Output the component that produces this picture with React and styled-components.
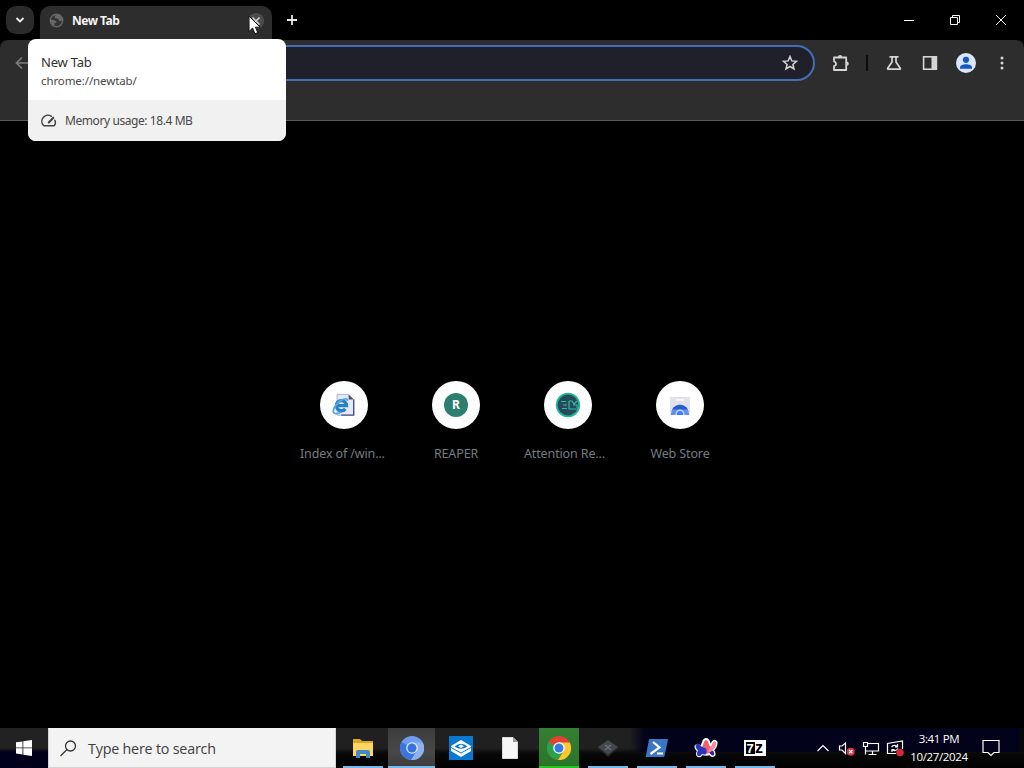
import React from 'react'
import styled, { createGlobalStyle } from 'styled-components'

const GlobalStyle = createGlobalStyle`
  * {
    box-sizing: border-box;
  }

  body {
    margin: 0;
    background-color: black;
    overflow: hidden;
  }

  svg {
    display: block;
    flex-shrink: 0;
  }
`

const Screen = styled.div`
  width: 1024px;
  height: 768px;
  position: relative;
  display: flex;
  flex-direction: column;
  background-color: black;
  font-family: "Noto Sans", "Open Sans", sans-serif;
  cursor: default;
`

const TabStrip = styled.div`
  height: 40px;
  display: flex;
  align-items: flex-end;
  padding-left: 6px;
`

const TabSearch = styled.div`
  width: 28px;
  height: 28px;
  margin-bottom: 6px;
  border-radius: 10px;
  background-color: #2b2b2b;
  display: flex;
  align-items: center;
  justify-content: center;
`

const Tab = styled.div`
  width: 232px;
  height: 34px;
  margin-left: 6px;
  padding: 0 9px 5px;
  border-radius: 10px 10px 0 0;
  background-color: #2d2d2d;
  display: flex;
  align-items: center;
`

const TabTitle = styled.span`
  flex: 1;
  margin-left: 8px;
  color: #f4f4f4;
  font-size: 12px;
  font-weight: 700;
  letter-spacing: -0.5px;
`

const TabClose = styled.div`
  width: 16px;
  height: 16px;
  border-radius: 50%;
  background-color: #4c4c4c;
  display: flex;
  align-items: center;
  justify-content: center;
  margin-right: -1px;
`

const NewTab = styled.div`
  width: 28px;
  height: 28px;
  margin: 0 auto 6px 6px;
  display: flex;
  align-items: center;
  justify-content: center;
`

const WindowButton = styled.div`
  width: 46px;
  height: 40px;
  display: flex;
  align-items: center;
  justify-content: center;
`

const Toolbar = styled.div`
  height: 81px;
  border-bottom: 1px solid #585858;
  border-radius: 8px 8px 0 0;
  background-color: #2d2d2d;
`

const ToolbarRow = styled.div`
  height: 46px;
  display: flex;
  align-items: center;
  padding: 0 14px 0 14px;
`

const AddressBar = styled.div`
  flex: 1;
  height: 36px;
  margin: 0 17px 0 84px;
  padding-right: 15px;
  border: 2px solid #426eb8;
  border-radius: 18px;
  background-color: #20202a;
  display: flex;
  align-items: center;
  justify-content: flex-end;
`

const Actions = styled.div`
  display: flex;
  align-items: center;
`

const ActionButtons = styled.div`
  display: flex;
  align-items: center;
  gap: 18px;

  & > :first-child {
    margin-right: 2px;
  }
`

const Divider = styled.div`
  width: 2px;
  height: 16px;
  margin: 0 18px 0 16px;
  background-color: #0c0c0c;
`

const Page = styled.main`
  flex: 1;
  display: flex;
  justify-content: center;
  align-items: flex-start;
  padding-top: 260px;
`

const Shortcut = styled.div`
  width: 112px;
  display: flex;
  flex-direction: column;
  align-items: center;
`

const ShortcutIcon = styled.div`
  width: 48px;
  height: 48px;
  border-radius: 50%;
  background-color: white;
  display: flex;
  align-items: center;
  justify-content: center;
`

const ShortcutLabel = styled.div`
  margin-top: 15px;
  width: 88px;
  color: #757b80;
  font-size: 12.5px;
  line-height: 19px;
  text-align: ${props => props.$align || "center"};
  letter-spacing: -0.13px;
  white-space: nowrap;
`

const Letter = styled.div`
  width: 24px;
  height: 24px;
  border-radius: 50%;
  background-color: #2b7f70;
  color: white;
  font-size: 12px;
  font-weight: 700;
  line-height: 24px;
  text-align: center;
`

const HoverCard = styled.div`
  position: absolute;
  left: 28px;
  top: 39px;
  width: 258px;
  height: 102px;
  border-radius: 8px;
  background-color: white;
  overflow: hidden;
  display: flex;
  flex-direction: column;
`

const CardTop = styled.div`
  height: 61px;
  padding: 14px 13px 0;
`

const CardTitle = styled.div`
  color: #303030;
  font-size: 13px;
  line-height: 19px;
  letter-spacing: -0.2px;
`

const CardUrl = styled.div`
  color: #484848;
  font-size: 11.5px;
  line-height: 18px;
  letter-spacing: -0.1px;
`

const CardMemory = styled.div`
  flex: 1;
  padding: 0 13px;
  background-color: #f1f1f1;
  color: #484848;
  font-size: 12px;
  letter-spacing: -0.42px;
  display: flex;
  align-items: center;
  gap: 8px;
`

const Pointer = styled.svg`
  position: absolute;
  left: 248px;
  top: 15px;
`

const Taskbar = styled.div`
  height: 40px;
  display: flex;
  background: linear-gradient(90deg, transparent 0 630px, #02021a 645px 1019px, #07070b 1019px) 0 0 / 100% 24px no-repeat,
    linear-gradient(#202020 0 20px, #090909 25px, #000 40px);
`

const Start = styled.div`
  width: 48px;
  background: linear-gradient(#222 0 20px, #00001a 24px);
  display: flex;
  align-items: center;
  justify-content: center;
`

const Search = styled.div`
  width: 288px;
  border: 1px solid #d4d4d4;
  border-top-color: #f3f3f3;
  background-color: #f3f3f3;
  color: #404040;
  font-family: "Open Sans", "Noto Sans", sans-serif;
  font-size: 14.3px;
  letter-spacing: -0.2px;
  display: flex;
  align-items: center;
  gap: 11px;
  padding: 0 0 0 11px;
`

const Apps = styled.div`
  display: flex;
  padding-left: 2px;
`

const backgrounds = {
  active: "linear-gradient(#3c3c3c, #484848 60%, #3c3c3c)",
  flash: "linear-gradient(#357f35, #287528)",
}

const AppButton = styled.div`
  width: ${props => props.$state === "active" ? "47px" : "40px"};
  margin: ${props => props.$state === "active" ? "0 1px" : "0 4.5px"};
  box-shadow: inset 0 -2px 0 ${props => props.$line || "transparent"};
  background: ${props => backgrounds[props.$state] || "transparent"};
  display: flex;
  align-items: center;
  justify-content: center;
`

const SevenZip = styled.div`
  width: 22px;
  height: 16px;
  border: 2px solid white;
  background-color: white;
  display: flex;
  font-family: "Liberation Sans", sans-serif;
  font-size: 13px;
  font-weight: 700;
  line-height: 13px;
  text-align: center;
`

const Seven = styled.span`
  width: 9px;
  background-color: black;
  color: white;
`

const Zed = styled.span`
  width: 9px;
  color: black;
  font-size: 16px;
  line-height: 12px;
`

const Tray = styled.div`
  margin-left: auto;
  padding-right: 24px;
  display: flex;
  align-items: center;
`

const Clock = styled.div`
  width: 60px;
  margin: 0 13px 0 5px;
  color: white;
  font-family: "Open Sans", "Noto Sans", sans-serif;
  font-size: 11.5px;
  line-height: 18px;
  letter-spacing: -0.35px;
  text-align: center;
  white-space: nowrap;
`


const GlobeIcon = () => (
  <svg width="15" height="15" viewBox="0 0 15 15">
    <circle cx="7.5" cy="7.5" r="6.2" fill="#333" stroke="#686868" strokeWidth="1.4" />
    <path d="M1.5 7q3-.5 4.500.5t1.500 2l-2 .8v2.500L3 12ZM7 1.500 5.500 4q.5 1.500 2.500 1.500t1.500 1.800q1.500 1.200 4 .2L13 4.500 10 2Z" fill="#686868" />
  </svg>
)

const StarIcon = () => (
  <svg width="16" height="16" viewBox="0 0 16 16" fill="none" stroke="#d5d5d5" strokeWidth="1.500">
    <path d="m8 1.5 1.8 4.4 4.7.4-3.6 3.1 1.1 4.6L8 11.500 4 14l1.1-4.6-3.6-3.1 4.7-.4Z" />
  </svg>
)

const PuzzleIcon = () => (
  <svg width="18" height="18" viewBox="0 0 18 18">
    <path d="M2 3.500H14.200V16H2v-3.800q2-.4 2-2.400T2 7.300Z" fill="none" stroke="#d5d5d5" strokeWidth="1.800" strokeLinejoin="round" />
    <path d="M6 3a2.100 2.100 0 0 1 4.200 0ZM14.700 7.600a2.100 2.100 0 0 1 0 4.200Z" fill="#d5d5d5" />
  </svg>
)

const FlaskIcon = () => (
  <svg width="16" height="16" viewBox="0 0 16 16" fill="none" stroke="#d5d5d5" strokeWidth="1.700" strokeLinejoin="round">
    <path d="M3.500 1.800h9M6 2v5L1.700 13.200q-.4 1 .7 1h11.200q1.100 0 .7-1L10 7V2" />
  </svg>
)

const PanelIcon = () => (
  <svg width="16" height="16" viewBox="0 0 16 16">
    <rect x="1.600" y="1.800" width="12.800" height="12.400" fill="none" stroke="#d5d5d5" strokeWidth="1.600" />
    <path d="M9.500 2H15v12H9.500z" fill="#d5d5d5" />
  </svg>
)

const ProfileIcon = () => (
  <svg width="20" height="20" viewBox="0 0 20 20">
    <circle cx="10" cy="10" r="10" fill="#dbe5fb" />
    <circle cx="10" cy="6.800" r="3.100" fill="#1459c6" />
    <path d="M4 15.800v-1.300c0-2 3-3.200 6-3.200s6 1.200 6 3.200v1.300Z" fill="#1459c6" />
  </svg>
)

const MenuIcon = () => (
  <svg width="16" height="16" viewBox="0 0 16 16" fill="#d5d5d5">
    <circle cx="8" cy="3" r="1.500" />
    <circle cx="8" cy="8" r="1.500" />
    <circle cx="8" cy="13" r="1.500" />
  </svg>
)

const GaugeIcon = () => (
  <svg width="16" height="16" viewBox="0 0 16 16" fill="none" stroke="#444" strokeWidth="1.500" strokeLinecap="round">
    <path d="M10.500 3.300A6.100 6.100 0 0 0 2.300 12.200q.3.600.9.600h9.600q.6 0 .9-.6a6.100 6.100 0 0 0 .2-5" />
    <path d="M7.800 9.500 12.300 4.800" strokeWidth="2.100" />
  </svg>
)

const ExplorerPageIcon = () => (
  <svg width="24" height="24" viewBox="0 0 26 26">
    <path d="M5.500 1.500H18l5.500 5.500v17h-18Z" fill="#e4e8f7" stroke="#a9afc8" />
    <path d="M23.500 7v17H10" fill="none" stroke="#4a508d" strokeWidth="1.500" />
    <path d="M18 1.500V7h5.500Z" fill="#4c5265" />
    <path d="M14.500 17.200a5.500 5.500 0 1 1 1.200-3.500H6" fill="none" stroke="#2681c9" strokeWidth="3.600" />
    <path d="M3 22C-1 21 3 12 10 8c4-2.500 7-2.200 6.500.5M3 22q3 1 7-1.500" fill="none" stroke="#52a9e4" strokeWidth="2" />
  </svg>
)

const AttentionIcon = () => (
  <svg width="26" height="26" viewBox="0 0 26 26" fill="none">
    <circle cx="13" cy="13" r="11.300" fill="#254a59" stroke="#20b799" strokeWidth="1.800" />
    <path d="M6 9.500h5M8 13h4M7 16.500h5M14 9v8h9M14 9h3l2 3 3-3M18 13h4v3" stroke="#39b7a6" strokeWidth="1.200" />
  </svg>
)

const StoreIcon = () => (
  <svg width="22" height="22" viewBox="0 0 22 22">
    <path d="M1 3h20v18H1z" fill="#e1e3e8" />
    <path d="M7 6h8" stroke="#fff" strokeWidth="1.500" />
    <path d="M2 21v-1.500a9 9 0 0 1 18 0V21Z" fill="#6590f0" />
    <path d="M3.200 15.500a9 9 0 0 1 15.600 0Z" fill="#2d5bce" />
    <path d="M6.500 21v-1a4.500 4.500 0 0 1 9 0v1Z" fill="#b9d2fb" />
    <path d="M8 21v-1a3 3 0 0 1 6 0v1Z" fill="#3d82ed" />
  </svg>
)

const WindowsIcon = () => (
  <svg width="16" height="16" viewBox="0 0 16 16" fill="#fff">
    <path d="M0 2.300 6.500 1.400v6.100H0zM7.300 1.200 16 0v7.500H7.300zM0 8.300h6.500v6.200L0 13.600zM7.300 8.300H16V16l-8.700-1.300z" />
  </svg>
)

const FolderIcon = () => (
  <svg width="22" height="20" viewBox="0 0 22 20">
    <path d="M1 1h7l2 2h11v15H1Z" fill="#dca52b" />
    <path d="M1 5h20v13H1Z" fill="#ffd65f" />
    <path d="M4 20v-6q0-2 2-2h10q2 0 2 2v6h-4v-4H8v4Z" fill="#4289c7" />
  </svg>
)

const ChromiumIcon = () => (
  <svg width="24" height="24" viewBox="0 0 24 24">
    <circle cx="12" cy="12" r="12" fill="#6d9df0" />
    <path d="M12 12 1.600 6A12 12 0 0 0 11 24l6-9Z" fill="#3974df" />
    <path d="M12 6.500h10.700A12 12 0 0 1 11 24l5.800-9.200Z" fill="#8fb2ef" />
    <circle cx="12" cy="12" r="5.800" fill="#dce8fc" />
    <circle cx="12" cy="12" r="4.500" fill="#3673dc" />
  </svg>
)

const MailBoxIcon = () => (
  <svg width="24" height="24" viewBox="0 0 24 24">
    <path d="M0 0h24v24H0z" fill="#0878d1" />
    <path d="m12 4 10 6v5l-10 6-10-6v-5Z" fill="#fff" />
    <path d="M5.500 10.500Q12 5 18.500 10.500 12 15 5.500 10.500Z" fill="#0878d1" />
    <path d="M2 11.500 12 17l10-5.500" fill="none" stroke="#0878d1" />
    <path d="m9 10.300 3-1.800 3 1.800-3 1.700Z" fill="#fff" />
  </svg>
)

const FileIcon = () => (
  <svg width="16" height="22" viewBox="0 0 16 22">
    <path d="M.5.500H11L15.500 5v16.500H.5Z" fill="#f7f7f7" stroke="#dedede" />
    <path d="M11 .5V5h4.500Z" fill="#999" />
  </svg>
)

const ChromeIcon = () => (
  <svg width="24" height="24" viewBox="0 0 24 24">
    <circle cx="12" cy="12" r="12" fill="#e34132" />
    <path d="M12 12 1.600 6A12 12 0 0 0 11 24l6-9Z" fill="#2aa14c" />
    <path d="M12 6.500h10.700A12 12 0 0 1 11 24l5.800-9.200Z" fill="#fcc82e" />
    <circle cx="12" cy="12" r="5.800" fill="#fff" />
    <circle cx="12" cy="12" r="4.500" fill="#3479e4" />
  </svg>
)

const DiamondIcon = () => (
  <svg width="22" height="18" viewBox="0 0 22 18">
    <path d="m11 1 10 7-10 8L1 8Z" fill="#45474b" />
    <path d="m1 8 10 8 10-8v1.500L11 18 1 9.500Z" fill="#292b2f" />
    <path d="m8 6 6 5M14 6l-6 5" stroke="#69717c" strokeWidth="1.500" />
  </svg>
)

const PowerShellIcon = () => (
  <svg width="24" height="20" viewBox="0 0 24 20">
    <path d="M4.500 1h18q.7 0 .5.700L19.500 18q-.2 1-1.200 1h-17q-.7 0-.5-.8L4 1.500Z" fill="#3b76c4" />
    <path d="m8 4 6.500 5.500L5.500 16M12 15.500h6" fill="none" stroke="#fff" strokeWidth="2.200" />
  </svg>
)

const ArcIcon = () => (
  <svg width="24" height="22" viewBox="0 0 24 22" strokeLinejoin="round">
    <path d="M12 2q2.500 0 3.500 4l1 2.500Q18 7 18.500 5q2-2.500 4 0 .5 4-3.500 8 2.500 4 1 5.500-2.500 1.500-4-1.500-4 1.500-8 0-1.500 3-4 2-2-1.500 0-5-3-2.500-2.500-5 2-2.500 4 0l1.500 1.500L9 5q1-3 3-3Z" fill="#f4606d" stroke="#fff" strokeWidth="2" />
    <path d="M1.700 8q2-2.500 4 0 2.500 3 6.500 3.500 1 3-.5 6-2 0-3.700-.5-1.500 3-4 2-2-1.500 0-5.500-3-3-2.300-5.500Z" fill="#2935c2" />
    <path d="M15 12q3-2.500 3.700-6.500 2-2 3.500 0 .3 4-3.200 7.500-2 2-5 2.500Z" fill="#f08ba0" />
    <path d="M15.500 15.500 19 13.500q2 3.500.7 4.800-2 1-3.500-1.500Z" fill="#33209c" />
  </svg>
)

const TrayIcons = () => (
  <svg width="88" height="18" viewBox="0 0 88 18" fill="none" stroke="#fff" strokeWidth="1.200">
    <path d="m1.500 12 5.500-5.500 5.500 5.500" />
    {/* muted speaker */}
    <path d="M23.500 7h2.500L29.500 4v10.500L26 11h-2.500Z" />
    <circle cx="34.700" cy="12.700" r="4" fill="#d8343d" stroke="none" />
    <path d="m33 11 3.400 3.400m0-3.400L33 14.400" />
    {/* network */}
    <path d="M52 4.500h10.500v7.500H50M47.500 3.500h4v4h-4zM49.500 8v7.500M56.500 12v3.500M52.500 15.500h8" />
    {/* update pending */}
    <path d="M80 14.500h-8.500v-10l15-2.500v8" />
    <path d="M75.500 8q2.500-3 5.500-.5M81.500 5v3H79M82 9.500q-2.500 3.500-5.500 1M76 13v-2.500h2.500" />
    <circle cx="84" cy="13.500" r="3.800" fill="#d5293b" stroke="none" />
  </svg>
)

const shortcuts = [
  { name: "Index of /win...", icon: <ExplorerPageIcon />, align: "left" },
  { name: "REAPER", icon: <Letter>R</Letter> },
  { name: "Attention Re...", icon: <AttentionIcon />, align: "left" },
  { name: "Web Store", icon: <StoreIcon /> },
]

const apps = [
  { id: "files", icon: <FolderIcon />, line: "#76b9ed" },
  { id: "chromium", icon: <ChromiumIcon />, line: "#76b9ed", state: "active" },
  { id: "mail", icon: <MailBoxIcon /> },
  { id: "blank", icon: <FileIcon /> },
  { id: "chrome", icon: <ChromeIcon />, line: "#22c522", state: "flash" },
  { id: "diamond", icon: <DiamondIcon />, line: "#76b9ed" },
  { id: "powershell", icon: <PowerShellIcon />, line: "#76b9ed" },
  { id: "arc", icon: <ArcIcon />, line: "#76b9ed" },
  { id: "7zip", icon: <SevenZip><Seven>7</Seven><Zed>z</Zed></SevenZip>, line: "#76b9ed" },
]


function App() {
  return (
    <>
      <GlobalStyle />
      <Screen>
        <TabStrip>
          <TabSearch>
            <svg width="10" height="10" viewBox="0 0 10 10" fill="none" stroke="#eee" strokeWidth="1.800">
              <path d="m1.500 3 3.500 3.500L8.500 3" />
            </svg>
          </TabSearch>
          <Tab>
            <GlobeIcon />
            <TabTitle>New Tab</TabTitle>
            <TabClose>
              <svg width="8" height="8" viewBox="0 0 8 8" stroke="#ddd" strokeWidth="1.500">
                <path d="m.5.500 7 7m0-7-7 7" />
              </svg>
            </TabClose>
          </Tab>
          <NewTab>
            <svg width="12" height="12" viewBox="0 0 12 12" stroke="#e8e8e8" strokeWidth="1.800">
              <path d="M6 1v10M1 6h10" />
            </svg>
          </NewTab>
          <WindowButton>
            <svg width="10" height="10" viewBox="0 0 10 10" stroke="#fff">
              <path d="M0 5.500h10" />
            </svg>
          </WindowButton>
          <WindowButton>
            <svg width="10" height="10" viewBox="0 0 10 10" stroke="#fff" fill="none">
              <path d="M.5 2.500h7v7h-7zM2.500 2.500v-2h7v7h-2" />
            </svg>
          </WindowButton>
          <WindowButton>
            <svg width="10" height="10" viewBox="0 0 10 10" stroke="#fff">
              <path d="m0 0 10 10m0-10L0 10" />
            </svg>
          </WindowButton>
        </TabStrip>

        <Toolbar>
          <ToolbarRow>
            <svg width="16" height="16" viewBox="0 0 16 16" fill="none" stroke="#7c7c7c" strokeWidth="1.700">
              <path d="M14 8H3M8 2.500 2.500 8 8 13.500" />
            </svg>
            <AddressBar>
              <StarIcon />
            </AddressBar>
            <Actions>
              <PuzzleIcon />
              <Divider />
              <ActionButtons>
                <FlaskIcon />
                <PanelIcon />
                <ProfileIcon />
                <MenuIcon />
              </ActionButtons>
            </Actions>
          </ToolbarRow>
        </Toolbar>

        <Page>
          {shortcuts.map(item =>
            <Shortcut key={item.name}>
              <ShortcutIcon>{item.icon}</ShortcutIcon>
              <ShortcutLabel $align={item.align}>{item.name}</ShortcutLabel>
            </Shortcut>
          )}
        </Page>

        <Taskbar>
          <Start><WindowsIcon /></Start>
          <Search>
            <svg width="17" height="17" viewBox="0 0 17 17" fill="none" stroke="#333" strokeWidth="1.300">
              <circle cx="10.500" cy="6" r="5" />
              <path d="M7 9.500.5 16" />
            </svg>
            <span>Type here to search</span>
          </Search>
          <Apps>
            {apps.map(app =>
              <AppButton key={app.id} $state={app.state} $line={app.line}>{app.icon}</AppButton>
            )}
          </Apps>
          <Tray>
            <TrayIcons />
            <Clock>
              <div>3:41 PM</div>
              <div>10/27/2024</div>
            </Clock>
            <svg width="18" height="18" viewBox="0 0 18 18" fill="none" stroke="#fff" strokeWidth="1.200">
              <path d="M1 1.500h16v12h-5L9 16.500l-3-3H1Z" />
            </svg>
          </Tray>
        </Taskbar>

        <HoverCard>
          <CardTop>
            <CardTitle>New Tab</CardTitle>
            <CardUrl>chrome://newtab/</CardUrl>
          </CardTop>
          <CardMemory>
            <GaugeIcon />
            <span>Memory usage: 18.4 MB</span>
          </CardMemory>
        </HoverCard>
        <Pointer width="13" height="20" viewBox="0 0 13 20">
          <path d="M1 1v15.500l3.600-3.400L7 18.800l2.800-1.200-2.400-5.400h4.800Z" fill="#fff" stroke="#111" />
        </Pointer>
      </Screen>
    </>
  )
}

export default App
